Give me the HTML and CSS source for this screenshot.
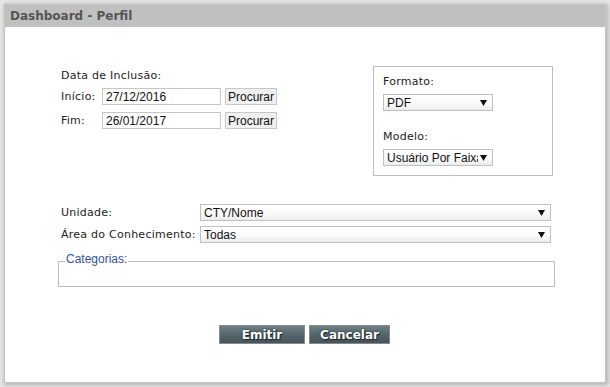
FILE: index.html
```html
<!DOCTYPE html>
<html lang="pt">
<head>
<meta charset="utf-8">
<title>Dashboard - Perfil</title>
<link rel="stylesheet" href="styles.css">
</head>
<body>
<div class="window">
  <div class="titlebar">Dashboard - Perfil</div>
  <div class="content">
    <div class="top">
      <div class="dates">
        <div class="label title">Data de Inclusão:</div>
        <div class="date-row">
          <span class="label date-lbl">Início:</span>
          <input class="date" type="text" value="27/12/2016">
          <button class="btn-plain" type="button">Procurar</button>
        </div>
        <div class="date-row second">
          <span class="label date-lbl">Fim:</span>
          <input class="date" type="text" value="26/01/2017">
          <button class="btn-plain" type="button">Procurar</button>
        </div>
      </div>
      <div class="options">
        <div class="label opt-lbl">Formato:</div>
        <div class="select small"><span class="sel-text">PDF</span><svg class="arrow" width="7" height="6" viewBox="0 0 7 6"><path d="M0 0H7L3.5 6Z" fill="#111"/></svg></div>
        <div class="label opt-lbl second">Modelo:</div>
        <div class="select small"><span class="sel-text">Usuário Por Faixa</span><svg class="arrow" width="7" height="6" viewBox="0 0 7 6"><path d="M0 0H7L3.5 6Z" fill="#111"/></svg></div>
      </div>
    </div>
    <div class="filters">
      <div class="filter-row">
        <span class="label filter-lbl">Unidade:</span>
        <div class="select wide"><span class="sel-text">CTY/Nome</span><svg class="arrow" width="7" height="6" viewBox="0 0 7 6"><path d="M0 0H7L3.5 6Z" fill="#111"/></svg></div>
      </div>
      <div class="filter-row">
        <span class="label filter-lbl">Área do Conhecimento:</span>
        <div class="select wide"><span class="sel-text">Todas</span><svg class="arrow" width="7" height="6" viewBox="0 0 7 6"><path d="M0 0H7L3.5 6Z" fill="#111"/></svg></div>
      </div>
    </div>
    <fieldset class="cats">
      <legend>Categorias:</legend>
    </fieldset>
    <div class="actions">
      <button class="btn-dark emitir" type="button">Emitir</button>
      <button class="btn-dark cancelar" type="button">Cancelar</button>
    </div>
  </div>
</div>
</body>
</html>
```

FILE: styles.css
```css
html, body {
  margin: 0;
  padding: 0;
  background: #e6e6e6;
}

body {
  width: 610px;
  height: 387px;
  overflow: hidden;
}

.window {
  box-sizing: border-box;
  margin: 4px 0 0 4px;
  width: 602px;
  height: 379px;
  background: #fff;
  border: 1px solid #c4c4c4;
  box-shadow: 1px 1px 4px 1px rgba(0, 0, 0, 0.22);
}

.titlebar {
  height: 22px;
  line-height: 22px;
  background: #c0c0c0;
  padding-left: 5px;
  font-family: "DejaVu Sans", Verdana, sans-serif;
  font-weight: bold;
  font-size: 12px;
  color: #555;
}

.content {
  padding-top: 39px;
}

.label {
  font-family: "DejaVu Sans", Verdana, sans-serif;
  font-size: 11px;
  letter-spacing: 0.25px;
  line-height: 14px;
  color: #222;
}

.top {
  display: flex;
  padding-left: 56px;
}

.dates {
  width: 312px;
  padding-top: 3px;
}

.title {
  margin-bottom: 5px;
}

.date-row {
  display: flex;
  align-items: center;
  height: 17px;
}

.date-row.second {
  margin-top: 7px;
}

.date-lbl {
  width: 41px;
}

.date {
  box-sizing: border-box;
  width: 119px;
  height: 17px;
  margin: 0;
  padding: 0 3px;
  border: 1px solid #c6c6c6;
  background: #fff;
  font-family: "Liberation Sans", Arial, sans-serif;
  font-size: 12px;
  color: #111;
  outline: none;
}

.btn-plain {
  box-sizing: border-box;
  margin: 0 0 0 4px;
  width: 52px;
  height: 17px;
  padding: 0;
  border: 1px solid #c8c8c8;
  background: #efefef;
  font-family: "Liberation Sans", Arial, sans-serif;
  font-size: 12px;
  color: #111;
}

.options {
  box-sizing: border-box;
  width: 180px;
  height: 110px;
  border: 1px solid #bdbdbd;
  padding: 8px 0 0 9px;
}

.opt-lbl.second {
  margin-top: 19px;
}

.select {
  box-sizing: border-box;
  display: flex;
  align-items: center;
  justify-content: space-between;
  height: 17px;
  border: 1px solid #c0c0c0;
  background: linear-gradient(to bottom, #ffffff 0%, #fbfbfb 55%, #ececec 100%);
  padding: 0 5px 0 3px;
  font-family: "Liberation Sans", Arial, sans-serif;
  font-size: 12px;
  color: #111;
  overflow: hidden;
}

.select.small {
  width: 110px;
  margin-top: 5px;
}

.sel-text {
  white-space: nowrap;
  overflow: hidden;
  flex: 1;
}

.arrow {
  flex: none;
  margin-left: 2px;
}

.filters {
  margin-top: 28px;
  padding-left: 56px;
}

.filter-row {
  display: flex;
  align-items: center;
}

.filter-row + .filter-row {
  margin-top: 5px;
}

.filter-lbl {
  width: 139px;
}

.select.wide {
  width: 351px;
}

.cats {
  box-sizing: border-box;
  margin: 9px 0 0 53px;
  width: 497px;
  padding: 0 6px;
  border: 1px solid #bdbdbd;
  height: 35px;
  min-width: 0;
}

.cats legend {
  padding: 0 1px 4px;
  font-family: "Liberation Sans", Arial, sans-serif;
  font-size: 12px;
  line-height: 14px;
  color: #3550a8;
}

.actions {
  display: flex;
  justify-content: center;
  gap: 4px;
  margin-top: 38px;
  padding-right: 1px;
}

.btn-dark {
  box-sizing: border-box;
  height: 19px;
  margin: 0;
  padding: 0;
  border: 1px solid #8a8a8a;
  background: linear-gradient(to bottom, #6f7e85 0%, #56666d 50%, #45545b 100%);
  font-family: "DejaVu Sans", Verdana, sans-serif;
  font-weight: bold;
  font-size: 12px;
  line-height: 16px;
  color: #fff;
  text-shadow: 0 0 2px #1d2a30, 1px 1px 1px #1d2a30;
}

.emitir {
  width: 86px;
}

.cancelar {
  width: 81px;
}
```
